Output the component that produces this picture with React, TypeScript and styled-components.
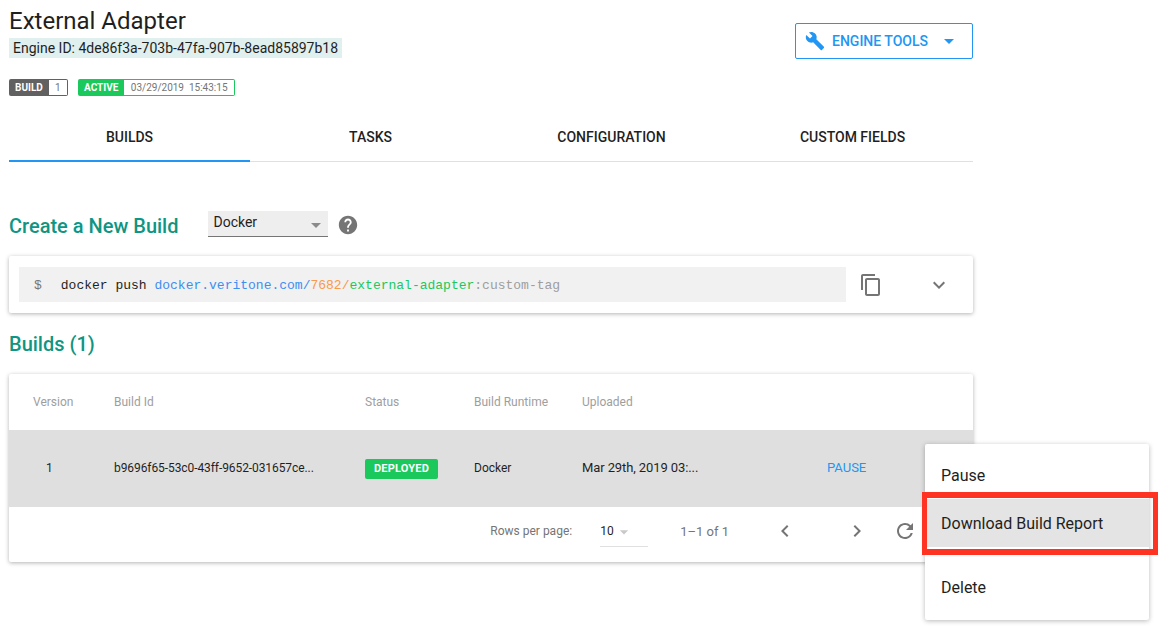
import React from "react";
import styled, { createGlobalStyle } from "styled-components";
import {
  MdBuild,
  MdArrowDropDown,
  MdHelp,
  MdContentCopy,
  MdExpandMore,
  MdChevronLeft,
  MdChevronRight,
  MdRefresh,
} from "react-icons/md";

const palette = {
  blue: "#2196f3",
  teal: "#0e9583",
  green: "#1ac85c",
  text: "#1f1f1f",
  gray: "#9e9e9e",
  icon: "#757575",
  rowGray: "#dfdfdf",
  line: "#e0e0e0",
};

const GlobalStyle = createGlobalStyle`
  html, body {
    margin: 0;
    padding: 0;
    background: #fff;
    font-family: Roboto, "Liberation Sans", sans-serif;
    color: ${palette.text};
  }
`;

const Page = styled.div`
  position: relative;
  width: 1161px;
  height: 628px;
  overflow: hidden;
  box-sizing: border-box;
  padding: 7px 0 0 9px;
`;

const Content = styled.div`
  width: 964px;
  display: flex;
  flex-direction: column;
`;

const Header = styled.div`
  display: flex;
  justify-content: space-between;
  align-items: flex-start;
  height: 72px;
`;

const Title = styled.h1`
  margin: 0;
  font-size: 24px;
  line-height: 28px;
  font-weight: 400;
`;

const EngineId = styled.div`
  display: inline-block;
  margin-top: 3px;
  padding: 0 4px;
  height: 20px;
  line-height: 20px;
  font-size: 14px;
  background: #dff0ef;
  white-space: nowrap;
`;

const ToolsButton = styled.button`
  margin-top: 16px;
  width: 178px;
  height: 36px;
  box-sizing: border-box;
  display: flex;
  align-items: center;
  padding: 0 0 0 9px;
  background: #fff;
  border: 1px solid ${palette.blue};
  border-radius: 2px;
  color: ${palette.blue};
  font-family: inherit;
  font-size: 14px;
  font-weight: 500;

  span {
    margin-left: 7px;
  }
`;

const ToolsCaret = styled(MdArrowDropDown)`
  margin-left: 9px;
`;

const BadgeRow = styled.div`
  display: flex;
  gap: 10px;
`;

const Badge = styled.div<{ $width: number }>`
  display: flex;
  width: ${(p) => p.$width}px;
  height: 17px;
  font-size: 10px;
  line-height: 17px;
`;

const BadgeLabel = styled.b<{ $color: string }>`
  background: ${(p) => p.$color};
  color: #fff;
  font-weight: 700;
  padding: 0 6px;
  border-radius: 2px 0 0 2px;
`;

const BadgeValue = styled.span<{ $color: string }>`
  flex: 1;
  box-sizing: border-box;
  line-height: 15px;
  text-align: center;
  color: #757575;
  white-space: pre;
  border-top: 1px solid ${(p) => p.$color};
  border-right: 1px solid ${(p) => p.$color};
  border-bottom: 1px solid ${(p) => p.$color};
  border-radius: 0 2px 2px 0;
`;

const Tabs = styled.div`
  display: grid;
  grid-template-columns: repeat(4, 1fr);
  margin-top: 20px;
  height: 45px;
  border-bottom: 1px solid ${palette.line};
`;

const Tab = styled.div<{ $active?: boolean }>`
  display: flex;
  align-items: center;
  justify-content: center;
  padding-bottom: 2px;
  font-size: 14px;
  font-weight: 500;
  margin-bottom: -1px;
  border-bottom: 2px solid ${(p) => (p.$active ? palette.blue : "transparent")};
`;

const CreateRow = styled.div`
  display: flex;
  align-items: flex-start;
  margin-top: 50px;
  height: 44px;
`;

const SectionTitle = styled.h2`
  margin: 0;
  font-size: 20px;
  line-height: 28px;
  font-weight: 500;
  color: ${palette.teal};
`;

const SelectBox = styled.div`
  margin: -1px 0 0 30px;
  width: 120px;
  height: 26px;
  box-sizing: border-box;
  display: flex;
  align-items: center;
  justify-content: space-between;
  padding: 0 0 3px 5px;
  background: #eeeeee;
  border-bottom: 1px solid #757575;
  font-size: 14px;
  color: ${palette.text};
`;

const SelectCaret = styled(MdArrowDropDown)`
  margin-top: 5px;
  color: #8a8a8a;
`;

const HelpIcon = styled(MdHelp)`
  margin: 2px 0 0 9px;
  color: ${palette.icon};
`;

const CodeCard = styled.div`
  height: 57px;
  box-sizing: border-box;
  display: flex;
  align-items: center;
  padding: 0 10px;
  background: #fff;
  border-radius: 2px;
  box-shadow: 0 1px 4px rgba(0, 0, 0, 0.3);
`;

const CodeBox = styled.div`
  width: 827px;
  height: 35px;
  box-sizing: border-box;
  display: flex;
  align-items: center;
  padding: 2px 0 0 15px;
  background: #f1f1f1;
  font-family: "Liberation Mono", monospace;
  font-size: 13px;
  white-space: pre;
`;

const Prompt = styled.span`
  color: ${palette.icon};
  margin-right: 19px;
`;

const CodePart = styled.span<{ $color: string }>`
  color: ${(p) => p.$color};
`;

const CopyIcon = styled(MdContentCopy)`
  margin-left: 13px;
  color: ${palette.icon};
`;

const ExpandIcon = styled(MdExpandMore)`
  margin-left: 44px;
  color: ${palette.icon};
`;

const BuildsTitle = styled(SectionTitle)`
  margin-top: 17px;
`;

const TableCard = styled.div`
  margin-top: 16px;
  height: 188px;
  background: #fff;
  border-radius: 2px;
  box-shadow: 0 1px 4px rgba(0, 0, 0, 0.3);
`;

const Row = styled.div<{ $height: number; $selected?: boolean }>`
  display: grid;
  grid-template-columns: 105px 251px 109px 108px 245px 1fr;
  align-items: center;
  height: ${(p) => p.$height}px;
  background: ${(p) => (p.$selected ? palette.rowGray : "transparent")};
  font-size: 12px;
`;

const HeadCell = styled.div<{ $first?: boolean }>`
  color: ${palette.gray};
  padding-left: ${(p) => (p.$first ? "24px" : "0")};
`;

const Cell = styled.div<{ $first?: boolean }>`
  padding-left: ${(p) => (p.$first ? "37px" : "0")};
  padding-bottom: 2px;
  white-space: nowrap;
`;

const BuildIdCell = styled(Cell)`
  letter-spacing: -0.08px;
`;

const DateCell = styled(Cell)`
  font-size: 13px;
  letter-spacing: -0.1px;
`;

const StatusCell = styled.div`
  display: flex;
`;

const StatusPill = styled.span`
  width: 73px;
  height: 20px;
  line-height: 20px;
  text-align: center;
  background: ${palette.green};
  color: #fff;
  border-radius: 2px;
  font-size: 11px;
  font-weight: 700;
  letter-spacing: 0.2px;
`;

const PauseLink = styled.span`
  color: ${palette.blue};
  font-size: 13px;
`;

const Footer = styled.div`
  height: 55px;
  box-sizing: border-box;
  display: flex;
  align-items: center;
  justify-content: flex-end;
  padding: 0 56px 7px 0;
  font-size: 12px;
  color: ${palette.icon};
`;

const RowsSelect = styled.div`
  margin: 6px 0 0 28px;
  width: 48px;
  height: 26px;
  box-sizing: border-box;
  display: flex;
  align-items: flex-start;
  padding-top: 2px;
  line-height: 16px;
  color: ${palette.text};
  border-bottom: 1px solid ${palette.line};
`;

const RowsCaret = styled(MdArrowDropDown)`
  color: #c9c9c9;
  margin: -1px 0 0 0;
`;

const PageRange = styled.span`
  margin-left: 32px;
  font-size: 13px;
`;

const PagerIcon = styled.span<{ $gap: number }>`
  display: flex;
  margin-left: ${(p) => p.$gap}px;
  color: ${palette.icon};
`;

const Menu = styled.div`
  position: absolute;
  left: 925px;
  top: 444px;
  width: 224px;
  height: 176px;
  box-sizing: border-box;
  padding-top: 7px;
  background: #fff;
  border-radius: 2px;
  box-shadow: 0 1px 5px rgba(0, 0, 0, 0.28);
`;

const MenuItem = styled.div<{ $marked?: boolean }>`
  position: relative;
  height: 48px;
  display: flex;
  align-items: center;
  padding-left: 16px;
  font-size: 16px;
  background: ${(p) => (p.$marked ? "#e4e4e4" : "transparent")};
`;

const MenuGap = styled.div<{ $height: number }>`
  height: ${(p) => p.$height}px;
`;

const Annotation = styled.div`
  position: absolute;
  left: -3px;
  top: -7px;
  width: 236px;
  height: 63px;
  box-sizing: border-box;
  border-style: solid;
  border-width: 6px 5px;
  border-color: #ff3321;
  pointer-events: none;
`;

const App: React.FC = () => {
  return (
    <Page>
      <GlobalStyle />
      <Content>
        <Header>
          <div>
            <Title>External Adapter</Title>
            <EngineId>Engine ID: 4de86f3a-703b-47fa-907b-8ead85897b18</EngineId>
          </div>
          <ToolsButton type="button">
            <MdBuild size={20} />
            <span>ENGINE TOOLS</span>
            <ToolsCaret size={24} />
          </ToolsButton>
        </Header>

        <BadgeRow>
          <Badge $width={59}>
            <BadgeLabel $color="#616161">BUILD</BadgeLabel>
            <BadgeValue $color="#616161">1</BadgeValue>
          </Badge>
          <Badge $width={157}>
            <BadgeLabel $color={palette.green}>ACTIVE</BadgeLabel>
            <BadgeValue $color={palette.green}>03/29/2019  15:43:15</BadgeValue>
          </Badge>
        </BadgeRow>

        <Tabs>
          <Tab $active>BUILDS</Tab>
          <Tab>TASKS</Tab>
          <Tab>CONFIGURATION</Tab>
          <Tab>CUSTOM FIELDS</Tab>
        </Tabs>

        <CreateRow>
          <SectionTitle>Create a New Build</SectionTitle>
          <SelectBox>
            Docker
            <SelectCaret size={24} />
          </SelectBox>
          <HelpIcon size={22} />
        </CreateRow>

        <CodeCard>
          <CodeBox>
            <Prompt>$</Prompt>
            <CodePart $color="#1f1f1f">docker push </CodePart>
            <CodePart $color="#3d8ef0">docker.veritone.com/</CodePart>
            <CodePart $color="#f79a4d">7682/</CodePart>
            <CodePart $color="#1ac85c">external-adapter</CodePart>
            <CodePart $color="#9e9e9e">:custom-tag</CodePart>
          </CodeBox>
          <CopyIcon size={24} />
          <ExpandIcon size={24} />
        </CodeCard>

        <BuildsTitle>Builds (1)</BuildsTitle>

        <TableCard>
          <Row $height={56}>
            <HeadCell $first>Version</HeadCell>
            <HeadCell>Build Id</HeadCell>
            <HeadCell>Status</HeadCell>
            <HeadCell>Build Runtime</HeadCell>
            <HeadCell>Uploaded</HeadCell>
            <HeadCell />
          </Row>
          <Row $height={77} $selected>
            <Cell $first>1</Cell>
            <BuildIdCell>b9696f65-53c0-43ff-9652-031657ce...</BuildIdCell>
            <StatusCell>
              <StatusPill>DEPLOYED</StatusPill>
            </StatusCell>
            <Cell>Docker</Cell>
            <DateCell>Mar 29th, 2019 03:...</DateCell>
            <Cell>
              <PauseLink>PAUSE</PauseLink>
            </Cell>
          </Row>
          <Footer>
            <span>Rows per page:</span>
            <RowsSelect>
              10
              <RowsCaret size={20} />
            </RowsSelect>
            <PageRange>1–1 of 1</PageRange>
            <PagerIcon $gap={44}>
              <MdChevronLeft size={24} />
            </PagerIcon>
            <PagerIcon $gap={48}>
              <MdChevronRight size={24} />
            </PagerIcon>
            <PagerIcon $gap={24}>
              <MdRefresh size={24} />
            </PagerIcon>
          </Footer>
        </TableCard>
      </Content>

      <Menu>
        <MenuItem>Pause</MenuItem>
        <MenuItem $marked>
          Download Build Report
          <Annotation />
        </MenuItem>
        <MenuGap $height={16} />
        <MenuItem>Delete</MenuItem>
      </Menu>
    </Page>
  );
};

export default App;
